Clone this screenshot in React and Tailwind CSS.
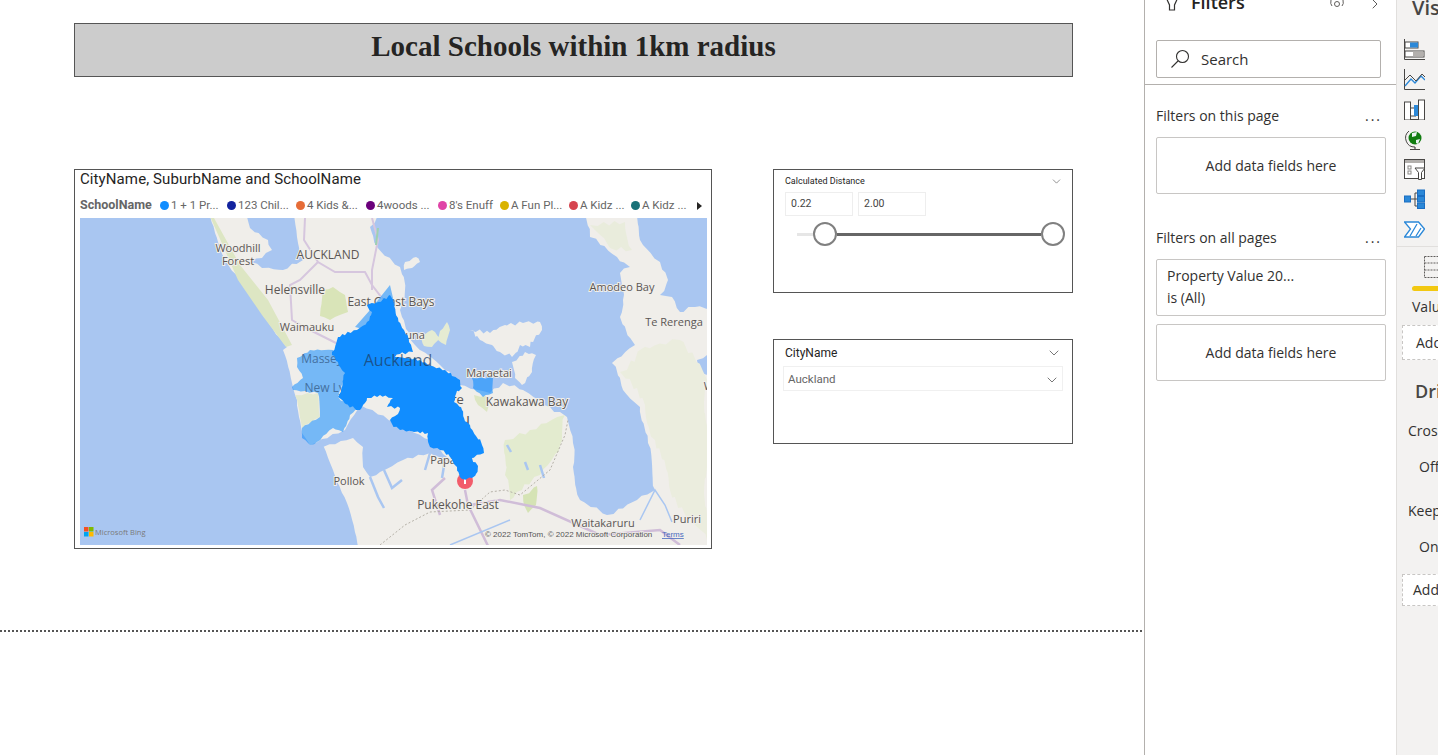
import { ChevronDown, ChevronRight } from "lucide-react";

const legend = [
  { label: "1 + 1 Pr...", dot: "bg-[#118dff]", width: "w-[67px]" },
  { label: "123 Chil...", dot: "bg-[#12239e]", width: "w-[69px]" },
  { label: "4 Kids &...", dot: "bg-[#e66c37]", width: "w-[70px]" },
  { label: "4woods ...", dot: "bg-[#6b007b]", width: "w-[72px]" },
  { label: "8's Enuff", dot: "bg-[#e044a7]", width: "w-[62px]" },
  { label: "A Fun Pl...", dot: "bg-[#d9b300]", width: "w-[69px]" },
  { label: "A Kidz ...", dot: "bg-[#d64550]", width: "w-[62px]" },
  { label: "A Kidz ...", dot: "bg-[#197278]", width: "w-[66px]" },
];

const labels = [
  { t: "Woodhill", x: 238, y: 252, s: 11 },
  { t: "Forest", x: 238, y: 265, s: 11 },
  { t: "AUCKLAND", x: 328, y: 259, s: 12 },
  { t: "Helensville", x: 295, y: 294, s: 12 },
  { t: "East Coast Bays", x: 391, y: 306, s: 12 },
  { t: "Waimauku", x: 307, y: 331, s: 11 },
  { t: "Amodeo Bay", x: 622, y: 291, s: 11 },
  { t: "Te Rerenga", x: 674, y: 326, s: 11 },
  { t: "Hauna", x: 408, y: 339, s: 11 },
  { t: "Maraetai", x: 489, y: 377, s: 11 },
  { t: "Kawakawa Bay", x: 527, y: 406, s: 12 },
  { t: "Panmure", x: 436, y: 404, s: 13 },
  { t: "Manukau", x: 435, y: 425, s: 16 },
  { t: "Papak", x: 446, y: 464, s: 11 },
  { t: "Pollok", x: 349, y: 485, s: 11 },
  { t: "Pukekohe East", x: 458, y: 509, s: 12 },
  { t: "Waitakaruru", x: 603, y: 527, s: 11 },
  { t: "Puriri", x: 687, y: 523, s: 11 },
  { t: "Waihi", x: 718, y: 390, s: 11 },
];

// breaks polygon edges up so coastlines don't look ruler straight
function rough(points, amp, step = 6) {
  const pts = points.split(" ").map((p) => p.split(",").map(Number));
  const out = [];
  let seed = 1;
  pts.forEach((a, i) => {
    const b = pts[(i + 1) % pts.length];
    const len = Math.hypot(b[0] - a[0], b[1] - a[1]);
    const n = Math.max(1, Math.round(len / step));
    for (let k = 0; k < n; k++) {
      const t = k / n;
      seed += 1;
      const dx = k === 0 ? 0 : Math.sin(seed * 12.9898) * amp;
      const dy = k === 0 ? 0 : Math.sin(seed * 78.233) * amp;
      out.push(`${(a[0] + (b[0] - a[0]) * t + dx).toFixed(1)},${(a[1] + (b[1] - a[1]) * t + dy).toFixed(1)}`);
    }
  });
  return out.join(" ");
}

const sea = "#a9c6f1";
const land = "#f0eeea";

function MapDrawing() {
  return (
    <svg viewBox="80 218 627 327" className="block w-[627px] h-[327px] font-['Open_Sans',sans-serif]">
      <rect x="80" y="218" width="627" height="327" fill={sea} />
      {/* land */}
      <polygon fill={land} points={rough("205,205 225,260 250,295 270,325 287,347 283,350 292,383 297,400 302,433 310,445 323,445 333,470 347,503 362,560 730,560 730,205", 0.8)} />
      {/* kaipara inlet */}
      <polygon fill={sea} points={rough("240,205 250,228 268,240 272,250 262,258 250,262 262,268 283,270 303,260 297,237 290,205", 1.5)} />
      {/* gulf and firth */}
      <polygon fill={sea} points={rough("383,205 370,227 377,247 400,267 405,290 400,310 415,345 440,365 460,385 490,393 503,383 523,390 550,407 567,417 573,443 573,467 580,500 607,515 637,500 655,490 648,443 640,407 623,390 612,363 635,345 620,317 623,300 620,273 630,267 617,257 590,237 583,205", 1.6)} />
      <polygon fill={sea} points={rough("633,205 640,240 660,262 668,280 660,295 672,297 680,312 695,307 730,310 730,205", 1.6)} />
      <polygon fill={sea} points={rough("697,360 707,355 720,355 720,378 700,372", 1)} />
      {/* manukau harbour */}
      <polygon fill={sea} points={rough("305,447 323,447 353,438 363,447 363,467 370,477 380,472 403,460 430,453 450,462 430,440 400,425 360,405 345,430", 1)} />
      <path d="M370 477 L378 497 L384 508 M384 470 L392 488 L402 480 M430 453 L425 470 M445 460 L442 478" stroke={sea} strokeWidth="2.5" fill="none" />
      {/* islands */}
      <polygon fill={land} points={rough("470,330 490,333 505,325 523,323 540,322 542,330 530,347 520,345 512,357 500,352 492,345 480,340", 1.8, 4)} />
      <polygon fill={land} points={rough("512,362 525,352 536,355 532,372 522,385 515,378", 1.2, 4)} />
      <polygon fill="#e5ebd2" points={rough("440,331 447,322 450,330 446,345 438,340", 0.6, 4)} />
      <polygon fill="#e5ebd2" points={rough("420,336 432,330 440,338 432,347 424,346", 0.6, 4)} />
      <polygon fill={land} points={rough("405,262 416,257 420,262 412,268 404,270", 1, 4)} />
      {/* green areas */}
      <polygon fill="#dde6c3" points="205,205 214,218 240,265 268,300 292,345 286,347 262,315 238,280" />
      <polygon fill="#d9e4b8" points={rough("322,290 333,287 345,295 348,312 330,320 320,316", 1)} />
      <polygon fill="#e3e9d0" points={rough("295,395 318,393 320,417 302,428", 1)} />
      <polygon fill="#e3ebcf" points={rough("505,440 530,430 565,415 560,445 540,475 522,490 510,500 505,475", 2)} />
      <polygon fill="#d5e3b5" points={rough("523,495 537,486 536,505 528,513", 1.5)} />
      <polygon fill="#dde6c3" points={rough("474,395 490,398 487,412 478,405", 1)} />
      <polygon fill="#ebedde" points={rough("620,372 640,350 680,340 707,380 707,540 670,490 655,440 645,405", 3)} />
      <polygon fill="#e9ecdc" points={rough("590,225 625,222 632,250 610,248", 2)} />
      <path d="M507 445 L511 452 M525 462 L528 470 M540 465 L544 478" stroke={sea} strokeWidth="2.5" fill="none" />
      {/* roads */}
      <path d="M305 218 L304 240 L318 262 L335 272 L365 272 L372 285 L382 298 L395 310 M372 218 L378 240 L372 270 L372 290 M318 262 L300 280 L290 285 L292 320 L304 327 L340 345" stroke="#d6c6de" strokeWidth="2" fill="none" />
      <path d="M378 228 L376 245" stroke="#9fd0b0" strokeWidth="2" fill="none" />
      <path d="M465 490 L468 505 L490 550 M445 478 L432 490 L440 515 M470 505 L500 500 L540 508 L600 535 L660 530 L680 545" stroke="#d0bdd8" strokeWidth="2.5" fill="none" />
      <path d="M380 545 L405 525 L430 512 L470 510 L490 492 L505 490 L520 495 L550 470 L565 435 L568 420" stroke="#b5b1a8" strokeWidth="1" strokeDasharray="2 2" fill="none" />
      <path d="M450 545 L510 520 M640 520 L655 490 L665 505 L672 522" stroke={sea} strokeWidth="1.5" fill="none" />
      {/* labels */}
      {labels.map((l) => (
        <text key={l.t} x={l.x} y={l.y} fontSize={l.s} textAnchor="middle" fill="#5b5654" stroke={land} strokeWidth="2" paintOrder="stroke">
          {l.t}
        </text>
      ))}
      {/* pin */}
      <circle cx="465" cy="481" r="8" fill="#f25c6b" />
      <path d="M465 477 V484" stroke="#ffffff" strokeWidth="2" />
      {/* light area */}
      <polygon fill="#118dff" fillOpacity="0.55" points={rough("297,358 310,350 333,350 345,373 338,397 348,405 358,407 350,415 343,432 333,428 317,442 310,445 302,438 302,428 320,417 318,393 293,390 292,387 303,378 297,367", 0.7, 4)} />
      <polygon fill="#118dff" fillOpacity="0.55" points="355,327 370,310 390,285 393,298 367,330" />
      <polygon fill="#118dff" fillOpacity="0.6" points={rough("472,378 493,378 493,393 483,397 473,388", 0.8, 4)} />
      <text x="322" y="363" fontSize="12" textAnchor="middle" fill="#44709f">Massey</text>
      <text x="332" y="392" fontSize="12" textAnchor="middle" fill="#44709f">New Lynn</text>
      {/* main area */}
      <polygon fill="#118dff" points={rough("390,295 394,305 398,318 404,330 409,342 413,352 400,354 395,357 408,358 420,360 432,366 445,370 452,376 460,380 462,388 456,394 454,402 462,410 464,418 470,425 476,436 482,445 484,453 472,458 478,466 476,474 472,478 462,479 457,467 450,457 440,450 430,447 428,433 414,432 400,430 392,424 390,420 398,414 400,408 387,407 393,398 380,395 367,398 360,410 348,405 338,397 345,373 338,362 332,355 332,352 338,337 357,330 367,322 372,312 367,305 378,302", 1.2, 3)} />
      <text x="398" y="366" fontSize="16" textAnchor="middle" fill="#1d3f66" fillOpacity="0.75">Auckland</text>
      {/* bing mark */}
      <rect x="84" y="527" width="4.5" height="4.5" fill="#f25022" />
      <rect x="89" y="527" width="4.5" height="4.5" fill="#7fba00" />
      <rect x="84" y="532" width="4.5" height="4.5" fill="#00a4ef" />
      <rect x="89" y="532" width="4.5" height="4.5" fill="#ffb900" />
      <text x="95" y="535" fontSize="7.5" fill="#7a7a7a">Microsoft Bing</text>
      <text x="485" y="537" fontSize="8" fill="#555555" stroke={land} strokeWidth="1.5" paintOrder="stroke" className="font-['Liberation_Sans',sans-serif]">
        © 2022 TomTom, © 2022 Microsoft Corporation
      </text>
      <text x="662" y="537" fontSize="8" fill="#4a6cc0" textDecoration="underline" className="font-['Liberation_Sans',sans-serif]">
        Terms
      </text>
    </svg>
  );
}

function MapVisual() {
  return (
    <div className="w-[638px] h-[380px] border border-[#555555] bg-white pl-[5px] font-['Roboto',sans-serif]">
      <div className="h-[20px] text-[15px] leading-[18px] tracking-[0.1px] text-[#252423]">CityName, SuburbName and SchoolName</div>
      <div className="flex items-center h-[28px] pt-[3px] text-[11.5px] text-[#666666] whitespace-nowrap">
        <span className="w-[80px] text-[12.5px] font-bold">SchoolName</span>
        {legend.map((item, i) => (
          <div key={i} className={`flex items-center gap-[2px] ${item.width}`}>
            <span className={`w-[9px] h-[9px] rounded-full ${item.dot}`}></span>
            <span>{item.label}</span>
          </div>
        ))}
        <span className="w-0 h-0 border-y-[4px] border-y-transparent border-l-[5px] border-l-[#252423]"></span>
      </div>
      <MapDrawing />
    </div>
  );
}

function Knob() {
  return <span className="w-[24px] h-[24px] rounded-full border-2 border-[#808080] bg-white shrink-0"></span>;
}

function Slicers() {
  return (
    <div className="ml-[61px] w-[300px] flex flex-col gap-[46px] font-['Roboto',sans-serif]">
      {/* Calculated Distance */}
      <div className="h-[124px] border border-[#555555] px-[11px]">
        <div className="flex items-center justify-between h-[22px] pt-[1px] text-[9px] text-[#252423]">
          <span>Calculated Distance</span>
          <ChevronDown size={13} strokeWidth={1.3} className="text-[#666666] -mr-[2px]" />
        </div>
        <div className="flex gap-[5px]">
          <div className="w-[68px] h-[24px] border border-[#eeeeee] pl-[5px] text-[10.5px] leading-[22px] text-[#444444]">0.22</div>
          <div className="w-[68px] h-[24px] border border-[#eeeeee] pl-[5px] text-[10.5px] leading-[22px] text-[#444444]">2.00</div>
        </div>
        <div className="flex items-center mt-[6px] ml-[12px] -mr-[4px]">
          <span className="w-[16px] h-[3px] bg-[#e6e6e6]"></span>
          <Knob />
          <span className="flex-1 h-[3px] bg-[#666666]"></span>
          <Knob />
        </div>
      </div>
      {/* CityName */}
      <div className="h-[105px] border border-[#555555] px-[9px]">
        <div className="flex items-center justify-between h-[26px] pl-[2px] text-[12px] text-[#252423]">
          <span>CityName</span>
          <ChevronDown size={16} strokeWidth={1.2} className="text-[#555555] mr-[1px]" />
        </div>
        <div className="flex items-center justify-between h-[25px] border border-[#f0f0f0] pl-[4px] pt-[2px] pr-[2px] text-[11.5px] text-[#666666]">
          <span>Auckland</span>
          <ChevronDown size={16} strokeWidth={1.2} className="text-[#555555]" />
        </div>
      </div>
    </div>
  );
}

function FilterCard({ children }) {
  return (
    <div className="w-[230px] h-[57px] ml-[11px] rounded-[2px] border border-[#c8c6c4] flex items-center justify-center text-[14px] text-[#323130]">
      {children}
    </div>
  );
}

function SectionHead({ title, className }) {
  return (
    <div className={`flex items-center justify-between h-[20px] ml-[11px] w-[225px] text-[14px] text-[#323130] ${className}`}>
      <span>{title}</span>
      <span className="tracking-[2px] -mr-[1px]">...</span>
    </div>
  );
}

function FiltersPane() {
  return (
    <div className="w-[252px] shrink-0 h-full border-l border-[#b3b0ad] bg-white font-['Open_Sans',sans-serif] overflow-hidden">
      {/* Header */}
      <div className="flex items-center h-[24px] -mt-[10px] pl-[19px] text-[#252423]">
        <svg width="16" height="18" viewBox="0 0 16 18" fill="none" stroke="#323130" strokeWidth="1.2" className="shrink-0">
          <path d="M0.5 1 H15.5 L10.5 12 V17 H5.5 V12 Z" />
        </svg>
        <span className="ml-[11px] text-[18px] font-semibold">Filters</span>
        <svg width="18" height="14" viewBox="0 0 18 14" fill="none" stroke="#605e5c" strokeWidth="1" className="shrink-0 ml-[83px] mt-[3px]">
          <circle cx="9" cy="7" r="2.5" />
          <path d="M3 3 Q2 7 4 9 M15 3 Q16 7 14 9" />
        </svg>
        <ChevronRight size={16} strokeWidth={1.2} className="shrink-0 ml-[21px] mt-[3px] text-[#323130]" />
      </div>

      {/* Search */}
      <div className="flex items-center w-[225px] h-[38px] ml-[11px] mt-[26px] rounded-[2px] border border-[#b3b0ad] pl-[13px] text-[15px] text-[#323130]">
        <svg width="20" height="20" viewBox="0 0 20 20" fill="none" stroke="#323130" strokeWidth="1.1">
          <circle cx="12.5" cy="7.5" r="6" />
          <path d="M8 12 L1.5 18.5" />
        </svg>
        <span className="ml-[11px]">Search</span>
      </div>
      <div className="h-px bg-[#b3b0ad] mt-[6px]"></div>

      <SectionHead title="Filters on this page" className="mt-[20px]" />
      <div className="mt-[12px]">
        <FilterCard>Add data fields here</FilterCard>
      </div>

      <SectionHead title="Filters on all pages" className="mt-[33px]" />
      <div className="mt-[12px]">
        <div className="w-[230px] h-[57px] ml-[11px] rounded-[2px] border border-[#c8c6c4] pl-[10px] pt-[5px] text-[14px] leading-[22px] text-[#323130]">
          <div>Property Value 20...</div>
          <div>is (All)</div>
        </div>
      </div>
      <div className="mt-[8px]">
        <FilterCard>Add data fields here</FilterCard>
      </div>
    </div>
  );
}

const iconStroke = "#484644";

const vizIcons = [
  <g key="bar">
    <path d="M0.5 0 V20.5 H21" stroke={iconStroke} fill="none" />
    <rect x="1" y="3" width="13" height="6" fill="#fff" stroke={iconStroke} />
    <rect x="6" y="3.5" width="8" height="5" fill="#2b88d8" />
    <rect x="1" y="12" width="19" height="6" fill="#fff" stroke={iconStroke} />
    <rect x="9" y="12.5" width="10.5" height="5" fill="#b3b0ad" />
  </g>,
  <g key="line">
    <path d="M0.5 0 V20.5 H21" stroke={iconStroke} fill="none" />
    <path d="M1 17 L7 10 L11 14 L17 7 L21 11" stroke="#2b88d8" strokeWidth="1.3" fill="none" />
    <path d="M1 11 L6 6 L12 12 L18 5 L21 8" stroke={iconStroke} fill="none" />
  </g>,
  <g key="ribbon">
    <rect x="0.5" y="3" width="6" height="18" fill="#fff" stroke={iconStroke} />
    <rect x="6.5" y="9" width="5" height="8" fill="#fff" stroke={iconStroke} />
    <rect x="10" y="6" width="4" height="11" fill="#2b88d8" />
    <rect x="14.5" y="1" width="6" height="20" fill="#fff" stroke={iconStroke} />
    <path d="M6.5 20.5 H14.5" stroke={iconStroke} />
  </g>,
  <g key="globe">
    <circle cx="11" cy="9" r="6.5" fill="#107c10" />
    <path d="M8 4 L13 3 L12 7 L8 8 Z M12 11 L16 10 L14 15 L12 14 Z" fill="#e8f0f0" />
    <path d="M5 2 A9 9 0 0 0 11 18" stroke={iconStroke} fill="none" />
    <path d="M11 18 V20 M6 20.5 H16" stroke={iconStroke} strokeWidth="1.2" fill="none" />
  </g>,
  <g key="slicer">
    <rect x="0.5" y="0.5" width="20" height="19" fill="#fff" stroke={iconStroke} />
    <rect x="1" y="1" width="19" height="3" fill="#b3b0ad" />
    <rect x="4" y="7" width="3" height="3" fill="#fff" stroke="#8a8886" />
    <rect x="4" y="12" width="3" height="3" fill="#fff" stroke="#8a8886" />
    <path d="M11 9 H21 L17.5 13.5 V20.5 H14.5 V13.5 Z" fill="#fff" stroke={iconStroke} />
  </g>,
  <g key="tree">
    <path d="M6 10 H11 M11 4 V17 M11 4 H14 M11 10 H14 M11 17 H14" stroke={iconStroke} fill="none" />
    <rect x="0.5" y="7" width="6" height="6" fill="#2b88d8" stroke="#1b6ec2" />
    <rect x="13.5" y="1" width="7" height="5.5" fill="#2b88d8" stroke="#1b6ec2" />
    <rect x="13.5" y="7.5" width="7" height="5.5" fill="#2b88d8" stroke="#1b6ec2" />
    <rect x="13.5" y="14" width="7" height="5.5" fill="#2b88d8" stroke="#1b6ec2" />
  </g>,
  <g key="automate">
    <path d="M0.5 3 H14.5 L20.5 10 L14.5 18 H0.5 L6.5 10 Z" fill="#fff" stroke="#2b88d8" strokeWidth="1.3" />
    <path d="M13 5 L6 17 M17 9 L12 17" stroke="#2b88d8" strokeWidth="1.3" fill="none" />
  </g>,
];

function VizPane() {
  return (
    <div className="w-[42px] shrink-0 h-full border-l border-[#e1dfdd] bg-[#f3f2f1] font-['Open_Sans',sans-serif] overflow-hidden whitespace-nowrap text-[#323130]">
      <div className="h-[24px] -mt-[4px] pl-[15px] text-[20px] font-semibold leading-[24px] text-[#484644]">Visualizations</div>
      <div className="flex flex-col gap-[9px] mt-[19px] pl-[7px]">
        {vizIcons.map((icon, i) => (
          <svg key={i} width="21" height="21" viewBox="0 0 21 21" className="shrink-0">
            {icon}
          </svg>
        ))}
      </div>
      <div className="h-px bg-[#e1dfdd] mt-[6px]"></div>

      <svg width="22" height="22" viewBox="0 0 22 22" className="mt-[9px] ml-[27px]" fill="none" stroke="#605e5c" strokeDasharray="2 1">
        <path d="M0.5 0.5 H21.5 M0.5 0.5 V21.5 H21.5 M0.5 7 H21.5 M0.5 14 H21.5" />
      </svg>
      <div className="w-[60px] h-[5px] ml-[15px] mt-[8px] rounded-full bg-[#f2c811]"></div>

      <div className="h-[20px] mt-[6px] pl-[15px] text-[14px] leading-[20px]">Values</div>
      <div className="w-[80px] h-[35px] ml-[5px] mt-[8px] border border-dashed border-[#c8c6c4] bg-white pl-[13px] text-[14px] leading-[33px]">Add data fields here</div>

      <div className="h-[24px] mt-[19px] pl-[18px] text-[18px] font-semibold leading-[24px] text-[#484644]">Drill through</div>
      <div className="h-[20px] mt-[18px] pl-[11px] text-[14px] leading-[20px]">Cross-report</div>
      <div className="h-[20px] mt-[16px] pl-[22px] text-[14px] leading-[20px]">Off</div>
      <div className="h-[20px] mt-[24px] pl-[11px] text-[14px] leading-[20px]">Keep all filters</div>
      <div className="h-[20px] mt-[16px] pl-[22px] text-[14px] leading-[20px]">On</div>
      <div className="w-[80px] h-[32px] ml-[5px] mt-[17px] border border-dashed border-[#c8c6c4] bg-white pl-[10px] text-[14px] leading-[30px]">Add drill-through</div>
    </div>
  );
}

export default function App() {
  return (
    <div className="flex w-[1438px] h-[755px] overflow-hidden bg-white">
      {/* Report canvas */}
      <div className="w-[1144px] shrink-0 pt-[23px]">
        <div className="w-[999px] h-[54px] ml-[74px] border border-[#555555] bg-[#cccccc] text-center font-['Liberation_Serif',serif] font-bold text-[29px] leading-[44px] text-[#252423]">
          Local Schools within 1km radius
        </div>
        <div className="flex ml-[74px] mt-[92px]">
          <MapVisual />
          <Slicers />
        </div>
        <div className="mt-[81px] w-[1142px] border-t-2 border-dotted border-[#555555]"></div>
      </div>
      <FiltersPane />
      <VizPane />
    </div>
  );
}
